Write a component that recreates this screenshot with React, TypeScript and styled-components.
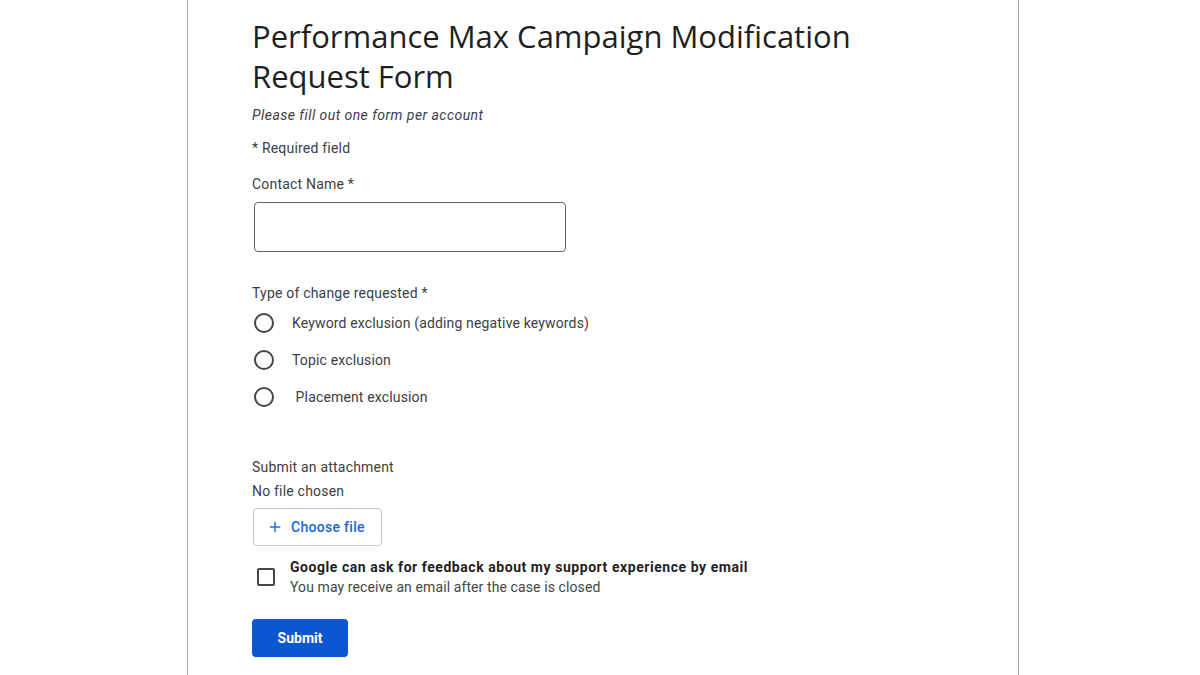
import styled, { createGlobalStyle } from 'styled-components';

const GlobalStyle = createGlobalStyle`
  html, body {
    margin: 0;
    padding: 0;
    background: #ffffff;
    overflow: hidden;
  }
  body {
    font-family: Roboto, 'Liberation Sans', sans-serif;
    color: #202124;
  }
`;

const options = [
  'Keyword exclusion (adding negative keywords)',
  'Topic exclusion',
  ' Placement exclusion',
];

export default function App() {
  return (
    <>
      <GlobalStyle />
      <Page>
        <Panel>
          <Title>Performance Max Campaign Modification Request Form</Title>
          <Subtitle>Please fill out one form per account</Subtitle>
          <Note>* Required field</Note>

          <FieldLabel>Contact Name *</FieldLabel>
          <TextInput type="text" />

          <GroupLabel>Type of change requested *</GroupLabel>
          <RadioList>
            {options.map((opt) => (
              <RadioRow key={opt}>
                <RadioCircle />
                <RadioText>{opt}</RadioText>
              </RadioRow>
            ))}
          </RadioList>

          <AttachLabel>Submit an attachment</AttachLabel>
          <FileStatus>No file chosen</FileStatus>
          <ChooseButton type="button">
            <svg width="18" height="18" viewBox="0 0 24 24">
              <path d="M19 13h-6v6h-2v-6H5v-2h6V5h2v6h6v2z" fill="#1a73e8" />
            </svg>
            Choose file
          </ChooseButton>

          <ConsentRow>
            <CheckBox />
            <ConsentText>
              <ConsentTitle>Google can ask for feedback about my support experience by email</ConsentTitle>
              <ConsentHint>You may receive an email after the case is closed</ConsentHint>
            </ConsentText>
          </ConsentRow>

          <SubmitButton type="button">Submit</SubmitButton>
        </Panel>
      </Page>
    </>
  );
}

const Page = styled.div`
  display: flex;
  height: 675px;
  padding-left: 187px;
  box-sizing: border-box;
`;

const Panel = styled.div`
  width: 832px;
  box-sizing: border-box;
  border-left: 1px solid #a8a8a8;
  border-right: 1px solid #a8a8a8;
  padding: 16px 64px 0 64px;
  display: flex;
  flex-direction: column;
  align-items: flex-start;
`;

const Title = styled.h1`
  margin: 0;
  width: 620px;
  font-family: 'Open Sans', Roboto, sans-serif;
  font-weight: 400;
  font-size: 31px;
  line-height: 40px;
  color: #1f1f1f;
`;

const BodyText = styled.div`
  font-size: 14px;
  line-height: 20px;
  letter-spacing: 0.2px;
  color: #3c4043;
`;

const Subtitle = styled(BodyText)`
  margin-top: 9px;
  font-style: italic;
  letter-spacing: 0.45px;
`;

const Note = styled(BodyText)`
  margin-top: 13px;
`;

const FieldLabel = styled(BodyText)`
  margin-top: 16px;
`;

const TextInput = styled.input`
  margin: 8px 0 0 2px;
  width: 312px;
  height: 50px;
  box-sizing: border-box;
  border: 1px solid #5f6368;
  border-radius: 4px;
  outline: none;
  font-size: 14px;
`;

const GroupLabel = styled(BodyText)`
  margin-top: 31px;
`;

const RadioList = styled.div`
  margin-top: 10px;
  display: flex;
  flex-direction: column;
  gap: 17px;
`;

const RadioRow = styled.label`
  display: flex;
  align-items: center;
  gap: 18px;
  height: 20px;
  padding-left: 2px;
`;

const RadioCircle = styled.span`
  width: 20px;
  height: 20px;
  box-sizing: border-box;
  border: 2px solid #444746;
  border-radius: 50%;
  flex-shrink: 0;
`;

const RadioText = styled.span`
  font-size: 14px;
  line-height: 20px;
  letter-spacing: 0.15px;
  color: #3c4043;
  white-space: pre;
`;

const AttachLabel = styled(BodyText)`
  margin-top: 50px;
`;

const FileStatus = styled(BodyText)`
  margin-top: 4px;
`;

const ChooseButton = styled.button`
  margin: 7px 0 0 1px;
  height: 38px;
  width: 129px;
  box-sizing: border-box;
  display: flex;
  align-items: center;
  gap: 7px;
  padding: 0 0 0 12px;
  background: #ffffff;
  border: 1px solid #c4c7c5;
  border-radius: 4px;
  font-family: Roboto, sans-serif;
  font-size: 14px;
  font-weight: 500;
  color: #1a66d6;
  letter-spacing: 0.3px;
`;

const ConsentRow = styled.div`
  margin-top: 11px;
  display: flex;
  align-items: center;
  gap: 15px;
  padding-left: 5px;
`;

const CheckBox = styled.span`
  width: 18px;
  height: 18px;
  box-sizing: border-box;
  border: 2px solid #444746;
  border-radius: 2px;
  flex-shrink: 0;
`;

const ConsentText = styled.div`
  display: flex;
  flex-direction: column;
`;

const ConsentTitle = styled.div`
  font-size: 14px;
  line-height: 20px;
  font-weight: 700;
  letter-spacing: 0.55px;
  color: #1f1f1f;
`;

const ConsentHint = styled(BodyText)`
  color: #444746;
  letter-spacing: 0.1px;
`;

const SubmitButton = styled.button`
  margin-top: 22px;
  width: 96px;
  height: 38px;
  border: none;
  border-radius: 4px;
  background: #0b57d0;
  color: #ffffff;
  font-family: Roboto, sans-serif;
  font-size: 14px;
  font-weight: 700;
`;
